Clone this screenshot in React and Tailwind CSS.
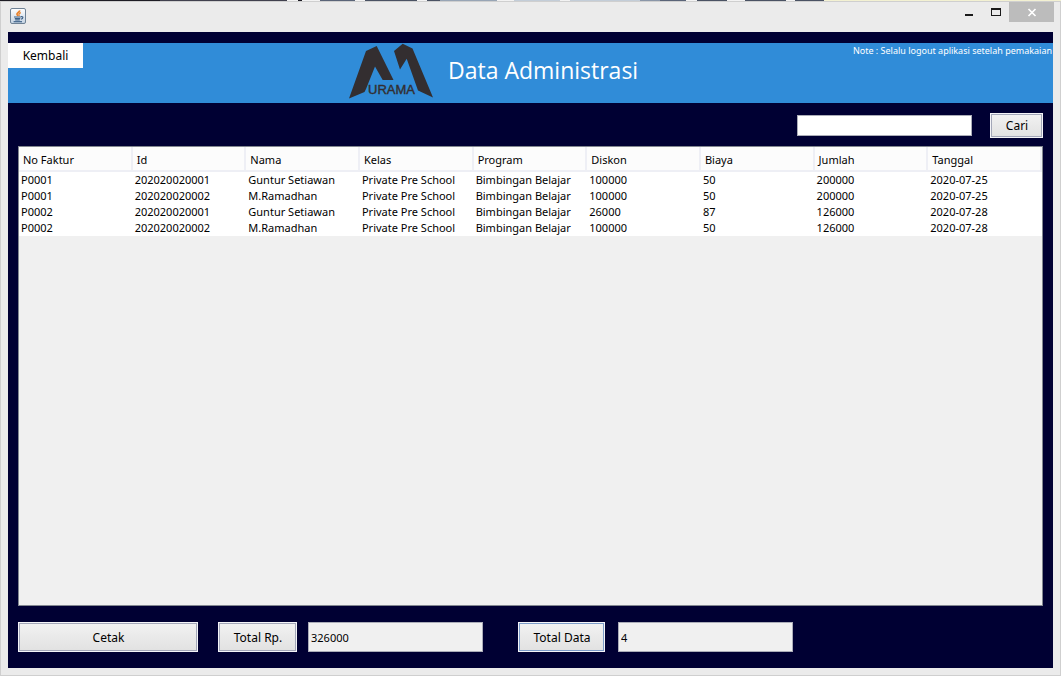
const columns = ["No Faktur", "Id", "Nama", "Kelas", "Program", "Diskon", "Biaya", "Jumlah", "Tanggal"];

const rows = [
  ["P0001", "202020020001", "Guntur Setiawan", "Private Pre School", "Bimbingan Belajar", "100000", "50", "200000", "2020-07-25"],
  ["P0001", "202020020002", "M.Ramadhan", "Private Pre School", "Bimbingan Belajar", "100000", "50", "200000", "2020-07-25"],
  ["P0002", "202020020001", "Guntur Setiawan", "Private Pre School", "Bimbingan Belajar", "26000", "87", "126000", "2020-07-28"],
  ["P0002", "202020020002", "M.Ramadhan", "Private Pre School", "Bimbingan Belajar", "100000", "50", "126000", "2020-07-28"],
];

// Slivers of the desktop that show above the window frame: [start, end, colour]
const desktop = [
  [0, 160, "#1d1c24"],
  [160, 287, "#40404e"],
  [287, 298, "#f2f2f2"],
  [298, 302, "#1d1c24"],
  [302, 320, "#f2f2f2"],
  [320, 355, "#5a6478"],
  [355, 365, "#f2f2f2"],
  [365, 417, "#4a5263"],
  [417, 427, "#f2f2f2"],
  [427, 440, "#4a5263"],
  [440, 497, "#98a5b5"],
  [497, 514, "#f2f2f2"],
  [514, 560, "#c3cdd8"],
  [560, 570, "#f2f2f2"],
  [570, 640, "#c3cdd8"],
  [640, 660, "#8a96a8"],
  [660, 686, "#5a6478"],
  [686, 697, "#f2f2f2"],
  [697, 727, "#4a5263"],
  [727, 745, "#f2f2f2"],
  [745, 786, "#4a5263"],
  [786, 795, "#f2f2f2"],
  [795, 824, "#4a5263"],
  [824, 1061, "#f3f1d2"],
];

function JavaIcon() {
  return (
    <svg viewBox="0 0 16 16" className="size-4" aria-hidden="true">
      <defs>
        <linearGradient id="tile" x1="0" y1="0" x2="0" y2="1">
          <stop offset="0" stopColor="#ffffff" />
          <stop offset="1" stopColor="#c3d2e2" />
        </linearGradient>
      </defs>
      <rect x="0.5" y="0.5" width="15" height="15" rx="1.5" fill="url(#tile)" stroke="#6f8295" />
      <path d="M9.6 2.4C10 4.200 6.400 4.800 7 6.400c.2.6.8 1 .9 1.700" fill="none" stroke="#e8822c" strokeWidth="1.700" />
      <path d="M10.800 4.600c-1.600.6-2.300 1.300-1.700 2.200.3.500.1.900-.3 1.300" fill="none" stroke="#e8822c" strokeWidth="1.200" />
      <path d="M4 9h6.800M4.800 10.700h5.400M5.200 12h4.600" fill="none" stroke="#3f6288" strokeWidth="1.200" />
      <path d="M10.800 8.600c2.900-.5 2.600 2.100.1 2.500" fill="none" stroke="#3f6288" strokeWidth="1.200" />
      <path d="M3.600 13.700h8.400" fill="none" stroke="#3f6288" strokeWidth="1.200" />
    </svg>
  );
}

function Logo() {
  return (
    <svg viewBox="0 0 86 58" className="h-[58px] w-[86px]" role="img" aria-label="Murama">
      <path
        fill="#332e30"
        d="M1 55.500 18 8 28.700 3 45.500 37H34.700L27 23.500 18 46 16.500 49ZM46 8 54.700 .8 64.500 5.500 85 54.500 70 47.500 58.700 15.700 52 26.500Z"
      />
      <text x="20" y="51" fontFamily="Liberation Sans, Arial, sans-serif" fontSize="13" fill="#332e30" stroke="#332e30" strokeWidth="0.400">
        URAMA
      </text>
    </svg>
  );
}

function SwingButton({ className = "", edge = "bg-[#a3a7b8]", children }) {
  return (
    <button
      type="button"
      className={`border border-[#f4f4f8] p-px text-xs text-black ${edge} ${className}`}
    >
      <span className="flex h-full items-center justify-center bg-linear-to-b from-[#f1f1f1] to-[#e2e2e2] pt-px pl-px">{children}</span>
    </button>
  );
}

export default function App() {
  return (
    <div className="flex min-h-screen flex-col bg-[#ebebeb] font-['Noto_Sans','Open_Sans',sans-serif] text-black">
      <svg viewBox="0 0 1061 1" preserveAspectRatio="none" className="h-px w-full shrink-0" aria-hidden="true">
        {desktop.map(([start, end, fill]) => (
          <rect key={start} x={start} y="0" width={end - start} height="1" fill={fill} />
        ))}
      </svg>

      <div className="flex flex-1 flex-col border border-[#cfcfcf] px-[7px] pb-[7px]">
        <div className="flex h-[30px] items-start justify-between">
          <div className="pt-[6px] pl-[2px]">
            <JavaIcon />
          </div>
          <div className="-mr-px flex h-5">
            <button type="button" aria-label="Minimize" className="flex w-7 items-center justify-center">
              <svg viewBox="0 0 10 10" className="size-[10px]"><path d="M1 7h8v2H1z" fill="#1a1a1a" /></svg>
            </button>
            <button type="button" aria-label="Maximize" className="flex w-[26px] items-center justify-center">
              <svg viewBox="0 0 10 10" className="size-[10px]"><path d="M0 1h10v8H0zM1 3v5h8V3z" fill="#1a1a1a" fillRule="evenodd" /></svg>
            </button>
            <button type="button" aria-label="Close" className="flex w-[45px] items-center justify-center bg-[#bcbcbc]">
              <svg viewBox="0 0 10 10" className="size-[10px]"><path d="M1.500 2l7 7M8.500 2l-7 7" stroke="#fff" strokeWidth="1.700" /></svg>
            </button>
          </div>
        </div>

        <main className="flex flex-1 flex-col bg-[#000033] pt-[11px] pb-4">
          <header className="grid h-[60px] grid-cols-[340px_auto_1fr] items-start bg-[#308cd8] text-white">
            <button type="button" className="h-[25px] w-[75px] bg-white text-xs text-black">Kembali</button>
            <div className="flex items-start gap-[14px]">
              <Logo />
              <h1 className="pt-[11px] font-['Open_Sans','Noto_Sans',sans-serif] text-[23px] leading-8">Data Administrasi</h1>
            </div>
            <p className="pr-px text-right text-[9px] leading-4">Note : Selalu logout aplikasi setelah pemakaian</p>
          </header>

          <form className="flex items-center justify-end gap-[18px] px-[10px] pt-[10px] pb-2" onSubmit={(e) => e.preventDefault()}>
            <input type="text" aria-label="Cari data" className="h-[21px] w-[175px] border border-[#abadb8] bg-white px-[2px] text-[11px]" />
            <SwingButton className="h-[25px] w-[53px]">Cari</SwingButton>
          </form>

          <div className="mx-[10px] flex-1 border border-[#828790] bg-[#f0f0f0]">
            <table className="w-full table-fixed border-separate border-spacing-0 text-[11px] leading-4">
              <thead>
                <tr className="h-[25px] bg-[#fcfcfc]">
                  {columns.map((name) => (
                    <th key={name} className="h-[25px] border-r-2 border-b-2 border-[#eeeff5] pt-[2px] pr-0 pb-0 pl-1 text-left font-normal">{name}</th>
                  ))}
                </tr>
              </thead>
              <tbody className="bg-white">
                {rows.map((row, i) => (
                  <tr key={i} className="h-4">
                    {row.map((value, j) => (
                      <td key={j} className="p-0 pl-[2px] whitespace-nowrap">{value}</td>
                    ))}
                  </tr>
                ))}
              </tbody>
            </table>
          </div>

          <div className="flex h-[46px] items-end px-[10px]">
            <SwingButton className="h-[30px] w-[180px]">Cetak</SwingButton>
            <SwingButton className="ml-5 h-[30px] w-[79px]">Total Rp.</SwingButton>
            <input type="text" readOnly aria-label="Total Rp." defaultValue="326000" className="ml-[11px] h-[30px] w-[175px] border border-[#abadb8] bg-[#f0f0f0] px-[2px] text-[11px]" />
            <SwingButton edge="bg-[#7c9cc8]" className="ml-[35px] h-[30px] w-[87px]">Total Data</SwingButton>
            <input type="text" readOnly aria-label="Total Data" defaultValue="4" className="ml-[13px] h-[30px] w-[175px] border border-[#abadb8] bg-[#f0f0f0] px-[2px] text-[11px]" />
          </div>
        </main>
      </div>
    </div>
  );
}
